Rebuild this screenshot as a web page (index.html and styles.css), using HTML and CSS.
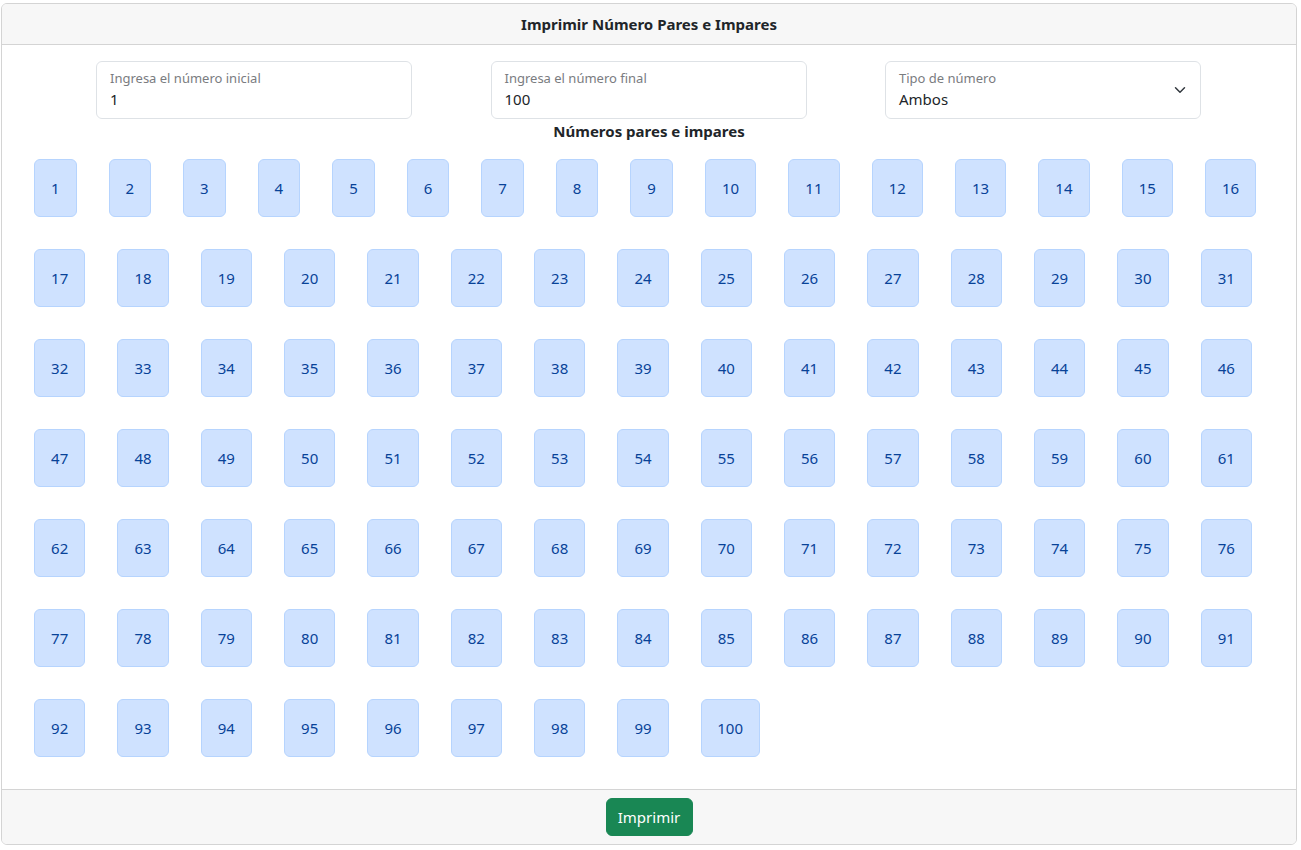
FILE: index.html
```html
<!DOCTYPE html>
<html lang="es">
<head>
<meta charset="utf-8">
<title>Imprimir Número Pares e Impares</title>
<link rel="stylesheet" href="styles.css">
</head>
<body>
<div class="card">
  <div class="card-header">Imprimir Número Pares e Impares</div>
  <div class="card-body">
    <div class="fields">
      <label class="field">
        <span class="field-label">Ingresa el número inicial</span>
        <input class="field-value" type="text" value="1">
      </label>
      <label class="field">
        <span class="field-label">Ingresa el número final</span>
        <input class="field-value" type="text" value="100">
      </label>
      <label class="field field-select">
        <span class="field-label">Tipo de número</span>
        <span class="field-value">Ambos</span>
        <svg class="chevron" width="16" height="12" viewBox="0 0 16 16"><path d="m2 5 6 6 6-6" fill="none" stroke="#343a40" stroke-linecap="round" stroke-linejoin="round" stroke-width="2"/></svg>
      </label>
    </div>
    <div class="subtitle">Números pares e impares</div>
    <div class="numbers" id="numbers"></div>
  </div>
  <div class="card-footer">
    <button class="btn-success" type="button">Imprimir</button>
  </div>
</div>
<script src="script.js"></script>
</body>
</html>
```

FILE: styles.css
```css
* { box-sizing: border-box; }
html, body { margin: 0; padding: 0; background: #fff; }
body {
  font-family: "Noto Sans", "Open Sans", sans-serif;
  font-size: 16px;
  line-height: 24px;
  color: #212529;
}
.card {
  margin: 3px 4px 0 1px;
  width: 1296px;
  border: 1px solid #d4d4d4;
  border-radius: 6px;
  overflow: hidden;
}
.card-header {
  background: #f7f7f7;
  border-bottom: 1px solid #d4d4d4;
  padding: 8px 16px;
  text-align: center;
  font-weight: 700;
  font-size: 15px;
}
.card-body { padding: 16px; }
.fields {
  display: flex;
  gap: 78.5px;
  padding-left: 78px;
}
.field {
  position: relative;
  display: flex;
  flex-direction: column;
  width: 316px;
  height: 58px;
  border: 1px solid #dee2e6;
  border-radius: 6px;
  padding: 8px 13px 7px;
  background: #fff;
}
.field-label {
  font-size: 13px;
  line-height: 17px;
  color: #7a7c7f;
}
.field-value {
  font: inherit;
  font-size: 15px;
  line-height: 24px;
  height: 24px;
  color: #212529;
  border: 0;
  padding: 0;
  margin: 0;
  outline: none;
  background: transparent;
  width: 100%;
}
.chevron {
  position: absolute;
  right: 12px;
  top: 22px;
}
.subtitle {
  text-align: center;
  font-weight: 700;
  font-size: 15px;
}
.numbers {
  display: flex;
  flex-wrap: wrap;
}
.num {
  margin: 16px;
  height: 58px;
  border: 1px solid #b6d4fe;
  border-radius: 6px;
  background: #cfe2ff;
  color: #084298;
  font-size: 15px;
  display: flex;
  align-items: center;
  justify-content: center;
}
.num.d1 { width: 42.56px; }
.num.d2 { width: 51.33px; }
.num.d3 { width: 59px; }
.card-footer {
  background: #f7f7f7;
  border-top: 1px solid #d4d4d4;
  padding: 8px 16px;
  display: flex;
  justify-content: center;
}
.btn-success {
  font: inherit;
  font-size: 15px;
  background: #198754;
  color: #fff;
  border: 1px solid #198754;
  border-radius: 6px;
  height: 38px;
  width: 87px;
  padding: 0;
}
```

FILE: script.js
```js
(function () {
  var box = document.getElementById('numbers');
  for (var i = 1; i <= 100; i++) {
    var d = document.createElement('div');
    var len = String(i).length;
    d.className = 'num d' + len;
    d.textContent = i;
    box.appendChild(d);
  }
})();
```
